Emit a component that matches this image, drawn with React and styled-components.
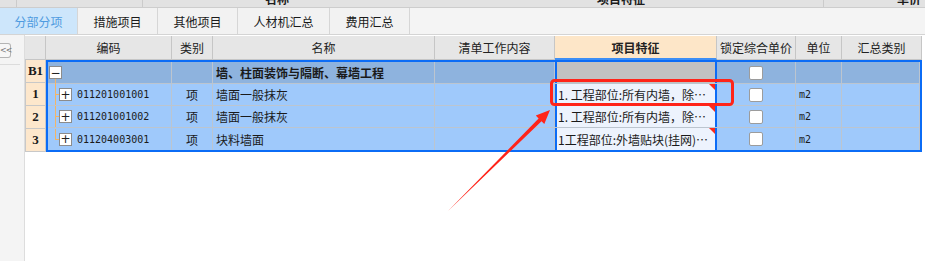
import React from "react";
import styled, { createGlobalStyle } from "styled-components";

const GlobalStyle = createGlobalStyle`
  html, body {
    margin: 0;
    padding: 0;
    background: #ffffff;
  }
  body {
    font-family: "Noto Sans CJK SC", "Liberation Sans", sans-serif;
    font-size: 12px;
    color: #1a1a1a;
  }
`;

const Page = styled.div`
  position: relative;
  width: 925px;
  height: 261px;
  overflow: hidden;
  display: flex;
  flex-direction: column;
`;

const TopStrip = styled.div`
  display: flex;
  height: 7px;
  flex-shrink: 0;
  background: #e2e2e2;
  border-bottom: 1px solid #cdcdcd;
  overflow: hidden;
`;

const StripCell = styled.div`
  width: ${(p) => p.$w}px;
  flex-shrink: 0;
  overflow: hidden;
  border-right: ${(p) => (p.$line ? "1px solid #cbcbcb" : "none")};
  box-sizing: border-box;
`;

const StripText = styled.div`
  margin-top: -7px;
  padding-left: ${(p) => p.$pad}px;
  font-weight: bold;
  font-size: 12px;
  line-height: 12px;
  color: #1c1c1c;
  white-space: nowrap;
`;

const TabBar = styled.div`
  display: flex;
  height: 26px;
  flex-shrink: 0;
  background: #f4f4f4;
  border-bottom: 1px solid #d4d4d4;
`;

const Tab = styled.div`
  width: ${(p) => p.$w}px;
  box-sizing: border-box;
  display: flex;
  align-items: center;
  justify-content: center;
  border-right: 1px solid #d6d6d6;
  background: ${(p) => (p.$active ? "#cde6fb" : "#f2f2f2")};
  color: ${(p) => (p.$active ? "#4f9be0" : "#1a1a1a")};
  font-size: 12px;
`;

const Main = styled.div`
  display: flex;
  flex: 1;
`;

const Gutter = styled.div`
  width: 24px;
  flex-shrink: 0;
  background: #f4f4f4;
  border-right: 1px solid #dddddd;
  padding-top: 8px;
  box-sizing: content-box;
`;

const CollapseButton = styled.div`
  width: 10px;
  height: 13px;
  border: 1px solid #b4b4b4;
  border-left: none;
  border-radius: 0 3px 3px 0;
  background: #f7f7f7;
  color: #7a7a7a;
  font-family: "DejaVu Sans", sans-serif;
  font-size: 8px;
  line-height: 13px;
  letter-spacing: -1px;
  text-align: center;
`;

const GutterRule = styled.div`
  width: 20px;
  height: 1px;
  margin-top: 6px;
  background: #dcdcdc;
`;

const Sheet = styled.div`
  flex: 1;
  background: #ffffff;
  padding-top: 1px;
`;

const HeaderRow = styled.div`
  display: flex;
  height: 24px;
`;

const HeadCell = styled.div`
  width: ${(p) => p.$w}px;
  flex-shrink: 0;
  box-sizing: border-box;
  display: flex;
  align-items: center;
  justify-content: center;
  background: ${(p) => (p.$hot ? "#fde6c8" : "#e6e6e6")};
  border-right: 1px solid #c6c6c6;
  border-bottom: ${(p) => (p.$hot ? "2px solid #3d8ef5" : "1px solid #c6c6c6")};
  font-weight: ${(p) => (p.$hot ? "bold" : "normal")};
  font-size: 12px;
  color: #222;
  white-space: nowrap;
`;

const Body = styled.div`
  display: flex;
`;

const RowNums = styled.div`
  width: 21px;
  display: flex;
  flex-direction: column;
`;

const RowNum = styled.div`
  height: 23px;
  box-sizing: border-box;
  display: flex;
  align-items: center;
  justify-content: center;
  background: #fde7cc;
  border-right: 1px solid #c8c8c8;
  border-bottom: 1px solid #c8c8c8;
  border-left: 1px solid #c8c8c8;
  font-family: "Liberation Serif", "DejaVu Serif", serif;
  font-weight: bold;
  font-size: 13px;
  color: #1a1a1a;
`;

const Frame = styled.div`
  width: 872px;
  border: 2px solid #0b6cf6;
  display: flex;
  flex-direction: column;
`;

const Row = styled.div`
  display: flex;
  height: 22px;
  box-sizing: border-box;
  background: ${(p) => (p.$group ? "#8eb3de" : "#9fc9fb")};
  border-bottom: ${(p) => (p.$last ? "none" : "1px solid #bcc5cf")};
`;

const Cell = styled.div`
  width: ${(p) => p.$w}px;
  flex-shrink: 0;
  box-sizing: border-box;
  display: flex;
  align-items: center;
  justify-content: ${(p) => (p.$center ? "center" : "flex-start")};
  padding-left: ${(p) => p.$pad || 0}px;
  border-right: 1px solid #bcc5cf;
  font-weight: ${(p) => (p.$bold ? "bold" : "normal")};
  white-space: nowrap;
  overflow: ${(p) => (p.$visible ? "visible" : "hidden")};
`;

const FeatureCell = styled.div`
  position: relative;
  width: 162px;
  flex-shrink: 0;
  box-sizing: border-box;
  display: flex;
  align-items: center;
  padding-left: 1px;
  background: ${(p) => (p.$group ? "#c1c1c1" : "#edf3fd")};
  border-left: 2px solid #0b6cf6;
  border-right: 2px solid #0b6cf6;
  white-space: nowrap;
  overflow: hidden;
  font-size: 12px;

  &::after {
    content: "";
    display: ${(p) => (p.$group ? "none" : "block")};
    position: absolute;
    top: 0;
    right: 0;
    border-top: 6px solid #ff2a1a;
    border-left: 6px solid transparent;
  }
`;

const ExpandBox = styled.span`
  position: relative;
  width: 13px;
  height: 13px;
  flex-shrink: 0;
  box-sizing: border-box;
  margin-left: ${(p) => p.$ml || 0}px;
  border: 1px solid #8c8c8c;
  background: #ffffff;
  display: flex;
  align-items: center;
  justify-content: center;
  font-family: "DejaVu Sans", sans-serif;
  font-size: 12px;
  line-height: 1;
  color: #222;

  &::after {
    content: "";
    display: ${(p) => (p.$stem ? "block" : "none")};
    position: absolute;
    left: 5px;
    top: 12px;
    width: 1px;
    height: 8px;
    background: #f4b565;
  }
`;

const Code = styled.span`
  margin-left: 5px;
  font-family: "DejaVu Sans Mono", "Liberation Mono", monospace;
  font-size: 10px;
  color: #1a1a1a;
`;

const Unit = styled.span`
  font-family: "DejaVu Sans Mono", "Liberation Mono", monospace;
  font-size: 10px;
`;

const Check = styled.span`
  width: 14px;
  height: 14px;
  box-sizing: border-box;
  background: #ffffff;
  border: 1px solid #9c9c9c;
  border-radius: 2px;
`;

const Annotation = styled.svg`
  position: absolute;
  left: 0;
  top: 0;
  pointer-events: none;
`;

const W = {
  code: 124,
  type: 41,
  name: 222,
  content: 120,
  lock: 79,
  unit: 46,
  sum: 78,
};

const tabs = [
  { label: "分部分项", w: 78, active: true },
  { label: "措施项目", w: 80 },
  { label: "其他项目", w: 80 },
  { label: "人材机汇总", w: 92 },
  { label: "费用汇总", w: 80 },
];

const headers = [
  { label: "", w: 21 },
  { label: "编码", w: 126 },
  { label: "类别", w: 41 },
  { label: "名称", w: 222 },
  { label: "清单工作内容", w: 120 },
  { label: "项目特征", w: 162, hot: true },
  { label: "锁定综合单价", w: 79 },
  { label: "单位", w: 46 },
  { label: "汇总类别", w: 80 },
];

const items = [
  { code: "011201001001", name: "墙面一般抹灰", feature: "1. 工程部位:所有内墙，除…" },
  { code: "011201001002", name: "墙面一般抹灰", feature: "1. 工程部位:所有内墙，除…" },
  { code: "011204003001", name: "块料墙面", feature: "1工程部位:外墙贴块(挂网)…" },
];

const TreeLine = ({ last }) => (
  <svg width="11" height="21" style={{ flexShrink: 0 }}>
    <line x1="7.5" y1="0" x2="7.5" y2={last ? 11 : 21} stroke="#f4b565" strokeWidth="1" />
    <line x1="7.5" y1="10.5" x2="11" y2="10.5" stroke="#f4b565" strokeWidth="1" />
  </svg>
);

const App = () => {
  return (
    <Page>
      <GlobalStyle />
      <TopStrip>
        <StripCell $w={17} $line />
        <StripCell $w={126} $line />
        <StripCell $w={300}>
          <StripText $pad={122}>名称</StripText>
        </StripCell>
        <StripCell $w={381} $line>
          <StripText $pad={154}>项目特征</StripText>
        </StripCell>
        <StripCell $w={101}>
          <StripText $pad={73}>单价</StripText>
        </StripCell>
      </TopStrip>

      <TabBar>
        {tabs.map((t) => (
          <Tab key={t.label} $w={t.w} $active={t.active}>
            {t.label}
          </Tab>
        ))}
      </TabBar>

      <Main>
        <Gutter>
          <CollapseButton>&lt;&lt;</CollapseButton>
          <GutterRule />
        </Gutter>

        <Sheet>
          <HeaderRow>
            {headers.map((h, i) => (
              <HeadCell key={i} $w={h.w} $hot={h.hot}>
                {h.label}
              </HeadCell>
            ))}
          </HeaderRow>

          <Body>
            <RowNums>
              <RowNum>B1</RowNum>
              <RowNum>1</RowNum>
              <RowNum>2</RowNum>
              <RowNum>3</RowNum>
            </RowNums>

            <Frame>
              <Row $group>
                <Cell $w={W.code} $visible>
                  <ExpandBox $ml={1} $stem>−</ExpandBox>
                </Cell>
                <Cell $w={W.type} />
                <Cell $w={W.name} $pad={3} $bold>
                  墙、柱面装饰与隔断、幕墙工程
                </Cell>
                <Cell $w={W.content} />
                <FeatureCell $group />
                <Cell $w={W.lock} $center>
                  <Check />
                </Cell>
                <Cell $w={W.unit} />
                <Cell $w={W.sum} />
              </Row>

              {items.map((it, i) => (
                <Row key={it.code} $last={i === items.length - 1}>
                  <Cell $w={W.code}>
                    <TreeLine last={i === items.length - 1} />
                    <ExpandBox>+</ExpandBox>
                    <Code>{it.code}</Code>
                  </Cell>
                  <Cell $w={W.type} $center>
                    项
                  </Cell>
                  <Cell $w={W.name} $pad={3}>
                    {it.name}
                  </Cell>
                  <Cell $w={W.content} />
                  <FeatureCell>{it.feature}</FeatureCell>
                  <Cell $w={W.lock} $center>
                    <Check />
                  </Cell>
                  <Cell $w={W.unit} $pad={3}>
                    <Unit>m2</Unit>
                  </Cell>
                  <Cell $w={W.sum} />
                </Row>
              ))}
            </Frame>
          </Body>
        </Sheet>
      </Main>

      <Annotation width="925" height="261" viewBox="0 0 925 261">
        <rect
          x="551.5"
          y="80.5"
          width="181"
          height="24"
          rx="3"
          fill="none"
          stroke="#ff2419"
          strokeWidth="3"
        />
        <polygon
          points="448,211 538.6,118.4 535.8,115.6 550,110 544.3,124.1 541.5,121.3"
          fill="#ff2419"
        />
      </Annotation>
    </Page>
  );
};

export default App;
